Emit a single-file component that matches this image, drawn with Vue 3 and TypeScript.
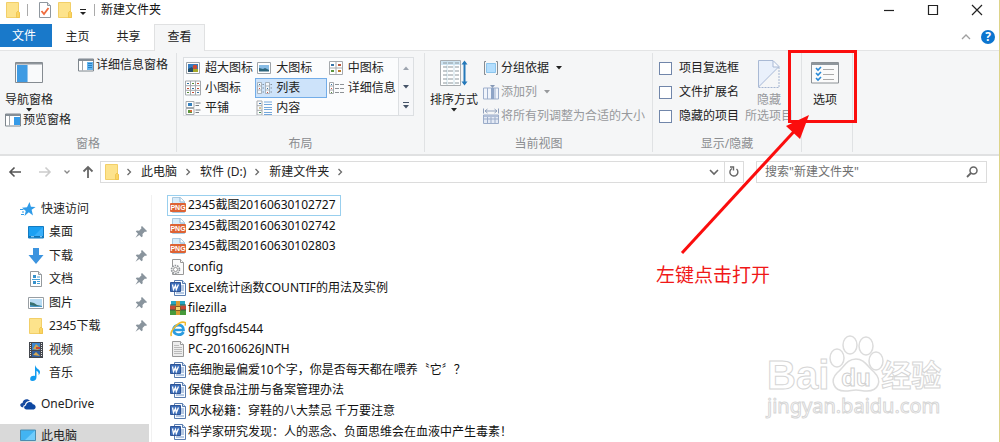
<script setup lang="ts">
import { ref } from 'vue'

interface ViewMode { label: string; icon: string }
interface NavItem { label: string; icon: string; pinned?: boolean; root?: boolean }
interface FileItem { name: string; icon: string }

const tabs: string[] = ['主页', '共享', '查看']
const activeTab = ref('查看')

const viewModes: ViewMode[] = [
  { label: '超大图标', icon: 'v-huge' },
  { label: '大图标', icon: 'v-large' },
  { label: '中图标', icon: 'v-medium' },
  { label: '小图标', icon: 'v-small' },
  { label: '列表', icon: 'v-list' },
  { label: '详细信息', icon: 'v-details' },
  { label: '平铺', icon: 'v-tiles' },
  { label: '内容', icon: 'v-content' },
]
const activeMode = ref('列表')

const toggles: string[] = ['项目复选框', '文件扩展名', '隐藏的项目']
const checked = ref<string[]>([])

const crumbs: string[] = ['此电脑', '软件 (D:)', '新建文件夹']
const query = ref('')

const quickItems: NavItem[] = [
  { label: '快速访问', icon: 'star', root: true },
  { label: '桌面', icon: 'desktop', pinned: true },
  { label: '下载', icon: 'download', pinned: true },
  { label: '文档', icon: 'document', pinned: true },
  { label: '图片', icon: 'picture', pinned: true },
  { label: '2345下载', icon: 'folder', pinned: true },
  { label: '视频', icon: 'video' },
  { label: '音乐', icon: 'music' },
]

const files: FileItem[] = [
  { name: '2345截图20160630102727', icon: 'png' },
  { name: '2345截图20160630102742', icon: 'png' },
  { name: '2345截图20160630102803', icon: 'png' },
  { name: 'config', icon: 'config' },
  { name: 'Excel统计函数COUNTIF的用法及实例', icon: 'word' },
  { name: 'filezilla', icon: 'archive' },
  { name: 'gffggfsd4544', icon: 'ie' },
  { name: 'PC-20160626JNTH', icon: 'text' },
  { name: '癌细胞最偏爱10个字，你是否每天都在喂养〝它〞？', icon: 'word' },
  { name: '保健食品注册与备案管理办法', icon: 'word' },
  { name: '风水秘籍：穿鞋的八大禁忌 千万要注意', icon: 'word' },
  { name: '科学家研究发现：人的恶念、负面思维会在血液中产生毒素！', icon: 'word' },
]
const focused = ref(0)
</script>

<template>
  <div class="window">
    <svg class="defs" aria-hidden="true">
      <symbol id="folder" viewBox="0 0 16 16">
        <path d="M1.500.5h12v9.500l1 1v4.500h-13z" fill="#fde38c" stroke="#f2cf68" />
        <path d="M11.500 15.500v-5l1.500-1.500 1.500 1.500v5z" fill="#fbd561" stroke="#edc14d" stroke-width=".8" />
      </symbol>
      <symbol id="props" viewBox="0 0 16 16">
        <path d="M2.500.5h8l3 3v12h-11z" fill="#fff" stroke="#8f979e" />
        <path d="M10.500.5v3h3" fill="#dfe3e6" stroke="#8f979e" />
        <path d="M4.500 9l2.500 3 4.500-6" fill="none" stroke="#ef6b3d" stroke-width="1.800" />
      </symbol>
      <symbol id="pane-nav" viewBox="0 0 28 22">
        <path d="M.5.5h27v20H.5z" fill="#f9fafb" stroke="#858b91" />
        <path d="M1 1h26v1.500H1z" fill="#90979d" />
        <path d="M2 3h10v17H2z" fill="#3f9be3" /><path d="M12 3h1v17h-1z" fill="#93c5ec" />
      </symbol>
      <symbol id="pane-preview" viewBox="0 0 16 14">
        <path d="M.5 1h15v12H.5z" fill="#fff" stroke="#7f878e" /><path d="M1 1h14v2H1z" fill="#858e96" />
        <path d="M4.500 3v9.500" stroke="#9ba2a8" /><path d="M9 4h6v8H9z" fill="#369be8" />
      </symbol>
      <symbol id="pane-details" viewBox="0 0 16 14">
        <path d="M.5 1h15v12H.5z" fill="#fff" stroke="#7f878e" /><path d="M1 1h14v2H1z" fill="#858e96" />
        <path d="M4.500 3v9.500" stroke="#9ba2a8" /><path d="M9 4h6v8H9z" fill="#65b5ef" />
        <path d="M10 5.500h4M10 7.500h4M10 9.500h4" stroke="#1774bd" stroke-width=".8" />
      </symbol>
      <symbol id="v-huge" viewBox="0 0 16 16">
        <path d="M1.500 2.500h13v11h-13z" fill="#fff" stroke="#9da3a8" />
        <path d="M3 4h10v8H3z" fill="#357cc1" /><path d="M3 9l4-2 3 5H3z" fill="#254d68" />
        <circle cx="10" cy="7" r="2.300" fill="#cf4d32" /><path d="M8 9h5v3H8z" fill="#a6a829" />
      </symbol>
      <symbol id="v-large" viewBox="0 0 16 16">
        <path d="M1.500 2.500h13v11h-13z" fill="#fff" stroke="#9da3a8" />
        <path d="M3 5h10v6H3z" fill="#88bce5" /><path d="M3 8l4 1 2-1 4 2v1.500H3z" fill="#2c657c" />
      </symbol>
      <symbol id="v-medium" viewBox="0 0 16 16">
        <path d="M1.500 1.500h13v13h-13zM8 1.500v13M1.500 8h13" fill="#fff" stroke="#a5a9ad" />
        <path d="M3 4h3v2H3z" fill="#3874a8" /><path d="M10 4h3v2h-3z" fill="#b9563a" />
        <path d="M3 10h3v2H3z" fill="#5b963d" /><path d="M10 10h3v2h-3z" fill="#bf7a25" />
      </symbol>
      <symbol id="v-small" viewBox="0 0 16 16">
        <path d="M.5 1h15v14H.5zM5.500 1v14M10.500 1v14M.5 5.700h15M.5 10.300h15" fill="#fff" stroke="#a5a9ad" />
        <path d="M2 3h2v1H2zM7 8h2v1H7zM12 12h2v1h-2z" fill="#31719f" />
        <path d="M7 3h2v1H7zM2 12h2v1H2z" fill="#548a36" /><path d="M12 3h2v1h-2zM12 8h2v1h-2zM2 8h2v1H2zM7 12h2v1H7z" fill="#c24b36" />
      </symbol>
      <symbol id="v-list" viewBox="0 0 16 16">
        <path d="M1.500 2.500h4v11h-4zM9.500 2.500h4v11h-4zM1.500 6h4M1.500 10h4M9.500 6h4M9.500 10h4" fill="#f5f8fb" stroke="#9ba5af" stroke-width=".8" />
        <path d="M3 4h1v1H3zM11 8h1v1h-1z" fill="#3474a5" /><path d="M3 8h1v1H3zM11 12h1v1h-1z" fill="#d05646" />
        <path d="M6.500 4.500H8M6.500 8H8M6.500 12H8M14.500 4.500H16M14.500 8H16M14.500 12H16" stroke="#87929e" />
      </symbol>
      <symbol id="v-details" viewBox="0 0 16 16">
        <path d="M1.500 2.500h4v11h-4zM1.500 6h4M1.500 10h4" fill="#fff" stroke="#a5a9ad" />
        <path d="M3 4h1v1H3z" fill="#3474a5" /><path d="M3 8h1v1H3z" fill="#d05646" /><path d="M3 12h1v1H3z" fill="#548a36" />
        <path d="M7 4.500h4M12 4.500h4M7 8.500h4M12 8.500h4M7 12.500h4M12 12.500h4" stroke="#8d9296" />
      </symbol>
      <symbol id="v-tiles" viewBox="0 0 16 16">
        <path d="M1 1.500h8v6H1zM1 8.500h8v6H1z" fill="#fff" stroke="#a5a9ad" />
        <path d="M3 3h4v3H3z" fill="#3580bd" /><path d="M3 10h4v3H3z" fill="#5d963b" /><path d="M5 10h2v2H5z" fill="#d66935" />
        <path d="M10.500 3h5M10.500 5.500h3.500M10.500 10h5M10.500 12.500h3.500" stroke="#777d82" />
      </symbol>
      <symbol id="v-content" viewBox="0 0 16 16">
        <path d="M1 1h5v14H1zM1 5.700h5M1 10.300h5" fill="#fff" stroke="#a5a9ad" />
        <path d="M3 3h2v1H3z" fill="#3a77b0" /><path d="M3 7.500h2v1H3z" fill="#a8872d" /><path d="M3 12h2v1H3z" fill="#408b53" />
        <path d="M8 2h8M8 4.500h8M8 7.500h8M8 9.500h8M8 12.500h8M8 14.500h8" stroke="#74a7db" />
      </symbol>
      <symbol id="sort" viewBox="0 0 28 28">
        <path d="M.5 1.500h20v25H.5z" fill="#fff" stroke="#a9adb0" /><path d="M1 2h19v4H1z" fill="#cfe5f3" />
        <path d="M7 2v24M14 2v24" stroke="#c9dfe9" />
        <path d="M3 4h4m1 0h5m2 0h4M3 8h4m1 0h5m2 0h4M3 12h4m1 0h5m2 0h4M3 16h4m1 0h5m2 0h4M3 20h4m1 0h5m2 0h4M3 24h4m1 0h5m2 0h4" stroke="#8c979d" />
        <path d="M24.500 3v22" stroke="#2478b9" stroke-width="2" /><path d="M21.500 5.500l3-4 3 4zM21.500 22.500l3 4 3-4z" fill="#2478b9" />
      </symbol>
      <symbol id="group" viewBox="0 0 16 16">
        <path d="M3 1.500H1.500v13H3M13 1.500h1.500v13H13" fill="none" stroke="#868c92" />
        <path d="M3.500 3.500h9v9h-9z" fill="#b3defe" stroke="#8cc5ec" />
      </symbol>
      <symbol id="add-col" viewBox="0 0 16 16">
        <path d="M.5 4h15v11H.5zM4.500 4v11M12 4v11" fill="#f0f4fb" stroke="#9eafcc" />
        <path d="M8 4h3v11H8z" fill="#8ea4c6" /><path d="M7 1h5L9.500 4z" fill="#8799b6" />
      </symbol>
      <symbol id="fit-cols" viewBox="0 0 16 16">
        <path d="M.5.5v5M15.500.5v5M2 3h12M4.500 1L2 3l2.500 2M11.500 1L14 3l-2.500 2" fill="none" stroke="#91a1bc" />
        <path d="M.5 7h15v8.500H.5zM.5 11h15M4.500 9v6M8 9v6M12 9v6" fill="#e4eaf5" stroke="#9bacc9" /><path d="M1 7h14v2H1z" fill="#b1bfd7" />
      </symbol>
      <symbol id="hide" viewBox="0 0 22 28">
        <path d="M1 1h14.500L21 6.500 1 27z" fill="#e9f0fb" /><path d="M15 1v6h6" fill="#f7f9fd" stroke="#a9b9d4" />
        <path d="M.5 27.500V.5h14.500L21 6.500.5 27" fill="none" stroke="#a9b9d4" />
        <path d="M21 7v20.500H1" fill="none" stroke="#a4b5d0" stroke-dasharray="2 1" />
      </symbol>
      <symbol id="options" viewBox="0 0 28 22">
        <path d="M.5.5h27v20.500H.5z" fill="#fbfbfb" stroke="#8c9196" /><path d="M1 1h26v2H1z" fill="#8f969c" />
        <path d="M5 6l2 2 3-3M5 11l2 2 3-3M5 16l2 2 3-3" fill="none" stroke="#2889d6" stroke-width="1.600" />
        <path d="M12 7.500h11M12 12.500h11M12 17.500h11" stroke="#aaa" />
      </symbol>
      <symbol id="star" viewBox="0 0 16 16">
        <path d="M9.500 1l1.400 4.800 4.700.1-4 2.900 1.400 5.700-4.200-3.300L4.500 15l1.300-5L2 6.800l5-.5z" fill="#2f9be8" />
        <path d="M0 8.500h3.500M2 11h2M1 13.500h3" stroke="#2f9be8" />
      </symbol>
      <symbol id="desktop" viewBox="0 0 16 16">
        <path d="M.5 2.500h15v11.500H.5z" fill="#1ba0f3" stroke="#137bc1" /><path d="M15 3L6 12h9z" fill="#38affb" />
        <path d="M1 12h14v1.500H1z" fill="#1272b3" /><path d="M3 12.700h3M12 12.700h2" stroke="#9ad5fb" />
      </symbol>
      <symbol id="download" viewBox="0 0 16 16"><path d="M5 0h6v7h4.500L8 16 .5 7H5z" fill="#3c94df" /></symbol>
      <symbol id="document" viewBox="0 0 16 16">
        <path d="M2.500.5h8l3 3v12h-11z" fill="#fff" stroke="#94999d" /><path d="M10.500.5v3h3" fill="#e5e9eb" stroke="#94999d" />
        <path d="M5 4h3v3H5zM5 10h3v3H5z" fill="#3792cc" /><path d="M4 8.500h8M9 6h3M9 10.500h3M9 12.500h3" stroke="#48a0d5" />
      </symbol>
      <symbol id="picture" viewBox="0 0 16 16">
        <path d="M.5 2.500h15v11H.5z" fill="#fff" stroke="#989ea3" /><path d="M2 4h12v8H2z" fill="#b9dcf3" />
        <path d="M2 7l4 1 3 2 5 1v1H2z" fill="#397270" /><path d="M2 10l5 1h7v1H2z" fill="#4a99c8" />
      </symbol>
      <symbol id="video" viewBox="0 0 16 16">
        <path d="M1 0h14v16H1z" fill="#44474d" /><path d="M4 1h8v7H4z" fill="#3d88d1" /><path d="M4 9h8v6H4z" fill="#315e9c" />
        <path d="M5 7l3-5 4 4-2 2z" fill="#d4a44b" /><path d="M8 5h4v2H8z" fill="#c1483c" /><path d="M5 13l3-3 4 4z" fill="#d8aa53" />
        <path d="M2.500 1v14M13.500 1v14" stroke="#e6e6e6" stroke-dasharray="1 1" />
      </symbol>
      <symbol id="music" viewBox="0 0 16 16">
        <path d="M7 0c1 4 5 4 5 7 0 1.500-.7 2.500-1.500 3.200.5-2-.3-3.700-2-4.400V12c0 2.500-1.600 4-4 4S2 14.800 2.300 13c.3-1.600 2.500-2.500 4.700-2z" fill="#129cf0" />
      </symbol>
      <symbol id="cloud" viewBox="0 0 16 16">
        <path d="M1.500 11C-.5 10 0 7 2.500 7c.3-4 5.500-5 7.500-2-3-.2-5 2-5 4-1.700.3-2 1.500-1.500 2.500z" fill="#184b9f" />
        <path d="M6.500 13.500c-3 0-3-3.500-.5-3.900.3-4 5.600-4.700 6.800-1.300 2.800-.3 4.200 4.200 1 5.200z" fill="#0d47a1" />
      </symbol>
      <symbol id="computer" viewBox="0 0 16 16">
        <path d="M.5 2h15v10.500H.5z" fill="#42b4f2" stroke="#4c8caf" /><path d="M15 2.500L5 12h10z" fill="#71ccfb" /><path d="M4 14.500h8" stroke="#74899a" />
      </symbol>
      <symbol id="pin" viewBox="0 0 12 12">
        <path d="M7 0l5 5-1 1-1-.5-2.500 2.500.2 2.300-1.200 1L4.300 9 .5 11.800 3 7.700.8 5.500l1-1 2.300.2L6.500 2.200 6 1z" fill="#89949d" />
      </symbol>
      <symbol id="png" viewBox="0 0 16 16">
        <path d="M2.500.5h8l4 4v11h-12z" fill="#d8ecfb" stroke="#a9c9df" /><path d="M10 .5V5h4.500" fill="#fff" stroke="#8eb7d4" />
        <rect y="6" width="16" height="9" rx="1" fill="#dd6234" />
      </symbol>
      <symbol id="config" viewBox="0 0 16 16">
        <path d="M2.500.5h8l3 3v12h-11z" fill="#fbfbfb" stroke="#989898" /><path d="M10.500.5v3h3" fill="#fff" stroke="#989898" />
        <circle cx="5.500" cy="10.500" r="4" fill="#eee" stroke="#8f9498" stroke-width="1.600" stroke-dasharray="1.500 1" /><circle cx="5.500" cy="10.500" r="2" fill="#fff" stroke="#999" />
      </symbol>
      <symbol id="word" viewBox="0 0 16 16">
        <path d="M4.500.5h8l3 3v12h-11z" fill="#f8fbff" stroke="#597cae" /><path d="M12.500.5v3h3" fill="#d5e3f6" stroke="#597cae" />
        <path d="M11 6h3M11 8h3M11 10h3M6 13h8" stroke="#7396c6" />
        <path d="M.5 2.500h10v9H.5z" fill="#3e6fb9" stroke="#2e5497" /><path d="M2.500 4.500l1 5 2-4 .8 4 2.200-5" fill="none" stroke="#fff" stroke-width="1.300" />
      </symbol>
      <symbol id="archive" viewBox="0 0 16 16">
        <path d="M1 1h14v4.500H1z" fill="#26a6c4" /><path d="M0 5.500h16V10H0z" fill="#c74b36" /><path d="M0 10h16v5H0z" fill="#479a3b" />
        <path d="M0 5h16M0 10h16" stroke="#335d42" /><path d="M6 1h4v14H6z" fill="#d99c33" /><path d="M5.500 6.500h5v4h-5z" fill="#f4d36f" stroke="#8b5c22" />
      </symbol>
      <symbol id="ie" viewBox="0 0 16 16">
        <path d="M13.500 11c-2.500 4.500-10 3-10-2.500S13.800 2 13.500 9H5" fill="none" stroke="#2b9ce0" stroke-width="2.700" />
        <path d="M1.500 15C-1 11 9-1 15 1.500c1 .7.500 2 0 3" fill="none" stroke="#f1bb2e" stroke-width="1.600" />
      </symbol>
      <symbol id="text" viewBox="0 0 16 16">
        <path d="M2.500.5h8l3 3v12h-11z" fill="#ededed" stroke="#999" /><path d="M10.500.5v3h3" fill="#fff" stroke="#999" />
        <path d="M4 4.500h5M4 6.500h8M4 8.500h8M4 10.500h8M4 12.500h8" stroke="#bbb" />
      </symbol>
      <symbol id="chev" viewBox="0 0 8 8"><path d="M2.500 1l3 3-3 3" fill="none" stroke="#6b6b6b" stroke-width="1.300" /></symbol>
      <symbol id="tri" viewBox="0 0 6 4"><path d="M0 0h6L3 3.500z" fill="currentColor" /></symbol>
    </svg>

    <header class="titlebar">
      <svg class="i16"><use href="#folder" /></svg>
      <span class="rule"></span>
      <button class="plain" aria-label="属性"><svg class="i16"><use href="#props" /></svg></button>
      <button class="plain" aria-label="新建"><svg class="i16"><use href="#folder" /></svg></button>
      <button class="plain customize" aria-label="自定义"><svg viewBox="0 0 8 8"><path d="M1 1.500h6" stroke="#222" /><path d="M1 4h6L4 7z" fill="#222" /></svg></button>
      <span class="rule"></span>
      <h1>新建文件夹</h1>
      <div class="controls">
        <button aria-label="最小化"><svg viewBox="0 0 12 12"><path d="M1 6.500h10" /></svg></button>
        <button aria-label="最大化"><svg viewBox="0 0 12 12"><path d="M1.500 1.500h9v9h-9z" /></svg></button>
        <button aria-label="关闭"><svg viewBox="0 0 12 12"><path d="M1 1l10 10M11 1L1 11" /></svg></button>
      </div>
    </header>

    <nav class="tabs">
      <button class="file-tab">文件</button>
      <button v-for="t in tabs" :key="t" class="tab" :class="{ active: t === activeTab }" @click="activeTab = t">{{ t }}</button>
      <div class="help">
        <button class="plain" aria-label="折叠功能区"><svg class="collapse" viewBox="0 0 10 6"><path d="M1 5l4-4 4 4" fill="none" stroke="#a0a0a0" stroke-width="1.300" /></svg></button>
        <button class="help-btn" aria-label="帮助">?</button>
      </div>
    </nav>

    <section class="ribbon">
      <div class="group panes">
        <div class="body">
          <div class="stack">
            <button class="big"><svg class="i28"><use href="#pane-nav" /></svg><span>导航窗格</span><svg class="tri"><use href="#tri" /></svg></button>
            <button class="small"><svg class="i16"><use href="#pane-preview" /></svg>预览窗格</button>
          </div>
          <button class="small details"><svg class="i16"><use href="#pane-details" /></svg>详细信息窗格</button>
        </div>
        <h2>窗格</h2>
      </div>

      <div class="group layout">
        <div class="body">
          <div class="gallery">
            <div class="modes">
              <button v-for="m in viewModes" :key="m.label" class="mode" :class="{ on: m.label === activeMode }" @click="activeMode = m.label">
                <svg class="i16"><use :href="'#' + m.icon" /></svg>{{ m.label }}
              </button>
            </div>
            <div class="scroll">
              <button aria-label="向上"><svg class="tri up"><use href="#tri" /></svg></button>
              <button aria-label="向下"><svg class="tri"><use href="#tri" /></svg></button>
              <button aria-label="更多"><svg class="more" viewBox="0 0 6 7"><path d="M0 .5h6" stroke="currentColor" /><path d="M0 3h6L3 6.500z" fill="currentColor" /></svg></button>
            </div>
          </div>
        </div>
        <h2>布局</h2>
      </div>

      <div class="group current">
        <div class="body">
          <button class="big"><svg class="i28 tall"><use href="#sort" /></svg><span>排序方式</span><svg class="tri"><use href="#tri" /></svg></button>
          <div class="lines">
            <button class="small"><svg class="i16"><use href="#group" /></svg>分组依据<svg class="tri"><use href="#tri" /></svg></button>
            <button class="small off" disabled><svg class="i16"><use href="#add-col" /></svg>添加列<svg class="tri"><use href="#tri" /></svg></button>
            <button class="small off" disabled><svg class="i16"><use href="#fit-cols" /></svg>将所有列调整为合适的大小</button>
          </div>
        </div>
        <h2>当前视图</h2>
      </div>

      <div class="group show">
        <div class="body">
          <div class="lines">
            <label v-for="t in toggles" :key="t"><input v-model="checked" type="checkbox" :value="t" />{{ t }}</label>
          </div>
          <button class="big hide off" disabled><svg class="hide-icon"><use href="#hide" /></svg><span>隐藏</span><span>所选项目</span></button>
        </div>
        <h2>显示/隐藏</h2>
      </div>

      <div class="group opts">
        <div class="body">
          <button class="big"><svg class="i28"><use href="#options" /></svg><span>选项</span></button>
        </div>
      </div>
    </section>

    <section class="location">
      <button class="plain" aria-label="后退"><svg class="i14" viewBox="0 0 14 14"><path d="M13 7H2M6.500 2.500L2 7l4.500 4.500" fill="none" stroke="#555" stroke-width="1.600" /></svg></button>
      <button class="plain" aria-label="前进"><svg class="i14" viewBox="0 0 14 14"><path d="M1 7h11M7.500 2.500L12 7l-4.500 4.500" fill="none" stroke="#ccc" stroke-width="1.600" /></svg></button>
      <button class="plain" aria-label="最近位置"><svg class="i8" viewBox="0 0 8 8"><path d="M1.500 2.500L4 5l2.500-2.500" fill="none" stroke="#888" stroke-width="1.300" /></svg></button>
      <button class="plain" aria-label="向上"><svg class="i14" viewBox="0 0 14 14"><path d="M7 13V2M2.500 6.500L7 2l4.500 4.500" fill="none" stroke="#666" stroke-width="1.800" /></svg></button>
      <div class="address">
        <svg class="i16"><use href="#folder" /></svg>
        <svg class="i8"><use href="#chev" /></svg>
        <template v-for="c in crumbs" :key="c">
          <button class="plain crumb">{{ c }}</button>
          <svg class="i8"><use href="#chev" /></svg>
        </template>
        <button class="plain history" aria-label="以前的位置"><svg class="i10" viewBox="0 0 10 10"><path d="M1 3l4 4 4-4" fill="none" stroke="#666" stroke-width="1.600" /></svg></button>
        <button class="plain refresh" aria-label="刷新"><svg class="i14" viewBox="0 0 14 14"><path d="M9.500 4A4 4 0 1 1 5 3.500M3 2h3.500v3.500" fill="none" stroke="#666" stroke-width="1.400" /></svg></button>
      </div>
      <div class="search">
        <input v-model="query" type="text" aria-label="搜索" placeholder="搜索&quot;新建文件夹&quot;" />
        <svg class="i14" viewBox="0 0 14 14"><circle cx="8.500" cy="5.500" r="3.500" fill="none" stroke="#666" stroke-width="1.500" /><path d="M6 8l-4 4" stroke="#666" stroke-width="1.800" /></svg>
      </div>
    </section>

    <main class="explorer">
      <aside>
        <div class="quick">
          <a v-for="n in quickItems" :key="n.label" href="#" :class="{ root: n.root }">
            <svg class="i16"><use :href="'#' + n.icon" /></svg>{{ n.label }}
            <svg v-if="n.pinned" class="pin"><use href="#pin" /></svg>
          </a>
        </div>
        <a href="#" class="root drive"><svg class="i16"><use href="#cloud" /></svg>OneDrive</a>
        <a href="#" class="root here"><svg class="i16"><use href="#computer" /></svg>此电脑</a>
      </aside>
      <ul class="files">
        <li v-for="(f, i) in files" :key="f.name">
          <button :class="{ focused: i === focused }" @click="focused = i">
            <svg class="i16" viewBox="0 0 16 16">
              <use :href="'#' + f.icon" />
              <text v-if="f.icon === 'png'" x="8" y="13" text-anchor="middle" class="png-label">PNG</text>
            </svg>{{ f.name }}
          </button>
        </li>
      </ul>
    </main>

    <svg class="arrow" viewBox="0 0 180 208" aria-hidden="true">
      <path d="M109.500 2.500h66v70h-66z" fill="none" stroke="#fb0d0d" stroke-width="3" />
      <path d="M2 204L120 76" stroke="#fb0d0d" stroke-width="3" />
      <path d="M129 66l-9 24-14-13z" fill="#fb0d0d" />
    </svg>
    <p class="note">左键点击打开</p>

    <div class="watermark" aria-hidden="true">
      <div class="brand">
        <span class="bai">Bai</span>
        <svg viewBox="0 0 56 60">
          <g fill="#fff" stroke="#dcdcdc" stroke-width="1.500">
            <ellipse cx="8" cy="25" rx="7" ry="9" /><ellipse cx="21" cy="12" rx="7" ry="9" />
            <ellipse cx="37" cy="13" rx="7" ry="9" /><ellipse cx="47" cy="28" rx="7" ry="9" />
            <path d="M27 26c8 0 11 7 18 13 9 9 4 19-7 19-5 0-7-1-11-1s-6 1-11 1C4 58 1 47 8 40c7-6 10-14 19-14z" />
          </g>
          <text x="27" y="53" text-anchor="middle" class="du">du</text>
        </svg>
        <span class="exp">经验</span>
      </div>
      <div class="site">jingyan.baidu.com</div>
    </div>
  </div>
</template>

<style>
body { margin: 0; background: #fff; }
</style>

<style scoped>
.window {
  position: relative;
  box-sizing: border-box;
  min-height: 100vh;
  display: flex;
  flex-direction: column;
  overflow: hidden;
  border-right: 1px solid #ddd48a;
  background: #fff;
  color: #222;
  font: 12px/16px "Noto Sans", "Noto Sans CJK SC", sans-serif;
}
.window * { box-sizing: border-box; }
svg { display: block; flex: none; }
button { border: 0; padding: 0; background: none; font: inherit; color: inherit; }
h1, h2, p, ul { margin: 0; padding: 0; font: inherit; }
.defs { position: absolute; width: 0; height: 0; }
.png-label { font: bold 7px "Liberation Sans", sans-serif; fill: #fff; }
.i8 { width: 8px; height: 8px; }
.i10 { width: 10px; height: 10px; }
.i14 { width: 14px; height: 14px; }
.i16 { width: 16px; height: 16px; }
.i28 { width: 28px; height: 22px; }
.i28.tall { height: 28px; }
.tri { width: 6px; height: 4px; }
.plain { display: flex; align-items: center; }

.titlebar { display: flex; align-items: center; height: 24px; padding: 0 0 5px 5px; }
.titlebar .rule { width: 1px; height: 12px; margin: 0 6px; background: #aaa; }
.titlebar .plain + .plain { margin-left: 4px; }
.titlebar .rule + .plain { margin-left: 3px; }
.titlebar .customize svg { width: 8px; height: 8px; margin: 4px 1px 0 2px; }
.titlebar h1 { color: #111; }
.controls { display: flex; margin-left: auto; }
.controls button { width: 44px; display: flex; justify-content: center; }
.controls svg { width: 12px; height: 12px; fill: none; stroke: #222; stroke-width: 1.200; }

.tabs { display: flex; height: 27px; border-bottom: 1px solid #e3e4e5; }
.file-tab { width: 52px; height: 23px; padding-right: 4px; background: #1979ca; color: #fff; }
.tab { width: 51px; height: 24px; border: 1px solid transparent; border-bottom: 0; }
.tab.active { height: 27px; padding-bottom: 3px; border-color: #e0e1e2; background: #f5f6f7; }
.help { display: flex; align-items: center; gap: 10px; margin-left: auto; padding-right: 4px; }
.collapse { width: 10px; height: 6px; }
.help-btn { width: 14px; height: 14px; border-radius: 50%; background: #0c75cf; color: #fff; font-weight: bold; line-height: 14px; }

.ribbon { display: flex; height: 105px; padding: 2px 0; background: #f5f6f7; border-bottom: 2px solid #e0e1e2; }
.group { display: flex; flex-direction: column; border-right: 1px solid #e0e2e4; flex: none; }
.body { display: flex; flex: 1; align-items: flex-start; }
.group h2 { height: 16px; text-align: center; color: #8b8d90; }
.panes { width: 177px; }
.layout { width: 248px; }
.current { width: 228px; }
.show { width: 149px; }
.opts { width: 51px; }
.big { display: flex; flex-direction: column; align-items: center; }
.big .i28 { margin-bottom: 8px; }
.small { display: flex; align-items: center; gap: 2px; height: 16px; white-space: nowrap; }
.small .tri { margin-left: 5px; }
.off { color: #97999c; }
.panes .stack { padding: 9px 0 0 5px; }
.panes .details { margin: 4px 0 0 24px; }
.layout .body { padding: 4px 10px 0 6px; }
.gallery { display: flex; flex: 1; height: 59px; overflow: hidden; border: 1px solid #dcdfe2; background: #fbfcfd; }
.modes { display: grid; flex: 1; grid-template-columns: repeat(3, 1fr); grid-auto-rows: 20px; }
.mode { display: flex; align-items: center; gap: 4px; border: 1px solid transparent; white-space: nowrap; }
.mode.on { border-color: #73ade8; background: #cde3fa; }
.scroll { display: grid; grid-template-rows: repeat(3, 1fr); width: 15px; border-left: 1px solid #dcdfe2; background: #f6f7f9; color: #465468; }
.scroll button { display: grid; place-items: center; }
.scroll .up { transform: rotate(180deg); opacity: .5; }
.scroll .more { width: 6px; height: 7px; }
.current .big { margin: 6px 5px 0 5px; }
.current .big .i28 { margin-bottom: 5px; }
.current .lines { padding-top: 7px; }
.lines { display: flex; flex-direction: column; gap: 8px; }
.show .lines { padding: 7px 0 0 6px; }
.show label { display: flex; align-items: center; gap: 7px; height: 16px; white-space: nowrap; }
.show input { appearance: none; width: 13px; height: 13px; margin: 0; border: 1px solid #7186aa; background: #fff; }
.show .big { margin: 7px 0 0 6px; }
.hide-icon { width: 22px; height: 28px; margin-bottom: 4px; }
.opts .big { margin: 9px auto 0 9px; }

.panes .body { position: relative; }
.panes .small.details { margin-left: 7px; }

.location { display: flex; align-items: center; padding: 5px 12px 0 8px; }
.location > .plain:nth-child(2) { margin-left: 16px; }
.location > .plain:nth-child(3) { margin-left: 11px; }
.location > .plain:nth-child(4) { margin-left: 10px; }
.address { display: flex; align-items: center; flex: 1; height: 22px; margin-left: 5px; padding-left: 3px; border: 1px solid #dcdcdc; }
.address > .i8 { margin: 0 8px 0 7px; }
.address > .i16 + .i8 { margin-left: 5px; }
.history { margin-left: auto; padding-right: 5px; }
.refresh { height: 20px; padding: 0 2px; border-left: 1px solid #dcdcdc; }
.search { display: flex; align-items: center; width: 231px; height: 22px; margin-left: 12px; padding: 0 7px 0 8px; border: 1px solid #dcdcdc; }
.search input { flex: 1; min-width: 0; border: 0; padding: 0; outline: 0; background: none; font: inherit; color: #333; }
.search input::placeholder { color: #6f6f6f; opacity: 1; }

.explorer { display: flex; flex: 1; padding-top: 12px; }
aside { display: flex; flex-direction: column; width: 152px; padding: 2px 2px 0 0; border-right: 1px solid #f1f1f1; }
aside a { display: flex; align-items: center; gap: 5px; padding-left: 28px; color: #222; text-decoration: none; }
aside a.root { padding-left: 20px; }
.quick { display: grid; grid-auto-rows: 1fr; height: 188px; }
.pin { width: 12px; height: 12px; margin: 0 2px 0 auto; }
.drive { height: 24px; margin: 7px 0 8px; }
.here { flex: 1; min-height: 18px; padding-top: 4px; background: #d9d9d9; }
.files { display: flex; flex-direction: column; flex: 1; padding: 0 0 2px 15px; list-style: none; }
.files li { display: flex; flex: 1; }
.files button { display: flex; align-items: center; gap: 2px; padding: 0 4px 0 2px; border: 1px solid transparent; white-space: nowrap; color: #111; }
.files button.focused { border-color: #99cfee; }

.arrow { position: absolute; left: 680px; top: 49px; width: 180px; height: 208px; pointer-events: none; }
.note { position: absolute; left: 656px; top: 263px; color: #f01818; font-size: 19px; line-height: 24px; }
.watermark { position: absolute; left: 767px; top: 333px; color: #fff; font-family: "Liberation Sans", "Noto Sans CJK SC", sans-serif; font-weight: bold; pointer-events: none; -webkit-text-stroke: 1px #d6d6d6; }
.brand { display: flex; align-items: flex-end; height: 60px; }
.brand svg { width: 56px; height: 60px; }
.bai { font-size: 40px; line-height: 36px; }
.exp { font-size: 30px; line-height: 34px; margin-left: -4px; }
.du { font: bold 24px "Liberation Sans", sans-serif; fill: #fff; stroke: #d0d0d0; stroke-width: 1px; }
.site { font: 20px/26px "Noto Sans", sans-serif; }
</style>
